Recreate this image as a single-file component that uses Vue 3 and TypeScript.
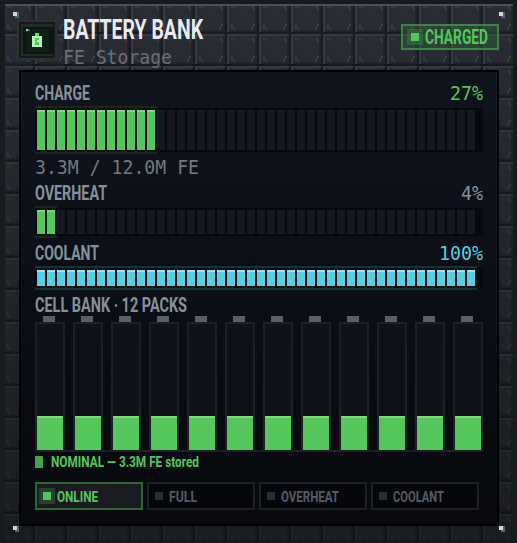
<template>
  <div class="page">
    <div class="machine">
      <svg class="plates" width="508" height="537" shape-rendering="crispEdges">
        <defs>
          <pattern id="plate" x="-2" y="-2" width="32" height="32" patternUnits="userSpaceOnUse">
            <rect width="32" height="32" fill="#181b20" />
            <rect width="30" height="30" fill="#2a2d35" />
            <rect width="30" height="2" fill="#383b41" />
            <rect width="2" height="30" fill="#383b41" />
            <rect x="28" y="2" width="2" height="28" fill="#21242b" />
            <rect x="2" y="28" width="28" height="2" fill="#21242b" />
            <rect v-for="(s, i) in specks" :key="i" :x="s[0]" :y="s[1]" :width="s[2]" :height="s[3]" :fill="s[4]" />
          </pattern>
        </defs>
        <rect width="508" height="537" fill="url(#plate)" />
      </svg>
      <div class="shade"></div>
      <i v-for="n in 4" :key="n" class="rivet" :class="'r' + n"></i>

      <div class="content">
        <div class="header">
          <div class="icon">
            <svg width="26" height="26" viewBox="0 0 26 26" shape-rendering="crispEdges">
              <rect width="30" height="27" x="-1" fill="#0a150f" />
              <rect x="2" y="2" width="23" height="23" fill="#0e2014" />
              <rect x="2" y="2" width="2" height="2" fill="#7ce08c" />
              <rect x="4" y="2" width="2" height="2" fill="#2b6a42" />
              <rect x="11" y="6" width="4" height="3" fill="#5fe070" />
              <rect x="8" y="9" width="10" height="11" fill="#b5f5b8" />
              <rect x="11" y="11" width="4" height="7" fill="#56c95c" />
              <rect x="13" y="13" width="2" height="2" fill="#d8ffd8" />
            </svg>
          </div>
          <div class="titles">
            <FitText class="title" text="BATTERY BANK" :w="140" :cap="19" />
            <FitText class="subtitle" text="FE Storage" :w="109" :cap="14" mono />
          </div>
          <div class="badge">
            <i class="led"></i>
            <FitText class="badge-text" text="CHARGED" :w="63" :cap="14" />
          </div>
        </div>

        <div class="screen">
          <template v-for="g in gauges" :key="g.name">
            <div class="head" :class="g.name">
              <FitText class="label" :text="g.label" :w="g.labelW" :cap="14" />
              <FitText class="value" :text="g.value" :w="g.valueW" :cap="14" mono />
            </div>
            <div class="bar" :class="g.name">
              <i v-for="n in 44" :key="n" class="seg" :class="{ on: n <= g.filled }"></i>
              <div v-if="g.filled" class="glow" :style="{ width: g.filled * 10 + 2 + 'px' }"></div>
            </div>
            <FitText v-if="g.note" class="note" :text="g.note" :w="164" :cap="14" mono />
          </template>

          <FitText class="label bank-label" text="CELL BANK · 12 PACKS" :w="152" :cap="14" />
          <div class="bank">
            <div v-for="n in 12" :key="n" class="pack">
              <div class="cap"></div>
              <div class="cell">
                <div class="fill" :style="{ height: packLevel + '%' }"></div>
              </div>
            </div>
          </div>
          <div class="status">
            <i class="mark"></i>
            <FitText text="NOMINAL — 3.3M FE stored" :w="148" :cap="11" />
          </div>

          <div class="chips">
            <div v-for="c in chips" :key="c.text" class="chip" :class="{ active: c.active }">
              <i class="led"></i>
              <FitText :text="c.text" :w="c.w" :cap="11" />
            </div>
          </div>
        </div>
      </div>
    </div>
  </div>
</template>

<script setup lang="ts">
import { h, ref } from 'vue';

interface FitProps {
  text: string;
  w: number;
  cap: number;
  mono?: boolean;
}

interface Gauge {
  name: string;
  label: string;
  labelW: number;
  value: string;
  valueW: number;
  filled: number;
  note?: string;
}

// one line of text, squeezed to a width; the box is as tall as a capital letter
const FitText = (props: FitProps) =>
  h('svg', {
    width: props.w,
    height: props.cap,
    'font-size': props.cap / (props.mono ? 0.729 : 0.711),
    'font-family': props.mono ? '"DejaVu Sans Mono", monospace' : 'Roboto, "Liberation Sans", sans-serif',
    fill: 'currentColor',
  }, [
    h('text', { x: 0, y: props.cap, textLength: props.w, lengthAdjust: 'spacingAndGlyphs' }, props.text),
  ]);
FitText.props = { text: String, w: Number, cap: Number, mono: Boolean };

const packLevel = ref(26.99);

const gauges = ref<Gauge[]>([
  { name: 'charge', label: 'CHARGE', labelW: 55, value: '27%', valueW: 33, filled: 12, note: '3.3M / 12.0M FE' },
  { name: 'overheat', label: 'OVERHEAT', labelW: 72, value: '4%', valueW: 22, filled: 2 },
  { name: 'coolant', label: 'COOLANT', labelW: 64, value: '100%', valueW: 44, filled: 44 },
]);

const chips = ref([
  { text: 'ONLINE', w: 41, active: true },
  { text: 'FULL', w: 28, active: false },
  { text: 'OVERHEAT', w: 58, active: false },
  { text: 'COOLANT', w: 51, active: false },
]);

// x, y, width, height, colour of the wear marks on one plate
const specks: [number, number, number, number, string][] = [
  [4, 4, 2, 2, '#363940'],
  [6, 4, 4, 2, '#30333b'],
  [8, 8, 2, 2, '#252830'],
  [16, 4, 4, 2, '#2e3139'],
  [24, 4, 4, 2, '#363a41'],
  [26, 6, 2, 2, '#3a3e44'],
  [22, 8, 2, 2, '#24272e'],
  [12, 10, 6, 2, '#2e3139'],
  [6, 14, 2, 2, '#24272e'],
  [18, 14, 2, 2, '#252830'],
  [20, 16, 4, 2, '#2e3139'],
  [10, 18, 2, 2, '#252830'],
  [4, 22, 2, 2, '#363a41'],
  [4, 24, 2, 2, '#3b3f45'],
  [6, 26, 2, 2, '#3b3f45'],
  [26, 22, 2, 2, '#3d4147'],
  [24, 24, 2, 2, '#3d4147'],
  [24, 26, 2, 2, '#363a41'],
  [14, 24, 4, 2, '#252830'],
];
</script>

<style>
body {
  margin: 0;
  background: #17181a;
}
</style>

<style scoped>
.page {
  box-sizing: border-box;
  width: 517px;
  height: 543px;
  padding: 4px 4px 3px 5px;
  overflow: hidden;
  background: #191a1d;
}
.machine {
  position: relative;
  width: 508px;
  height: 536px;
  overflow: hidden;
}
svg {
  display: block;
  overflow: visible;
  flex: none;
}
.plates, .shade {
  position: absolute;
  left: 0;
  top: 0;
}
.shade {
  width: 508px;
  height: 536px;
  box-sizing: border-box;
  border-top: 2px solid #4a5056;
  background: linear-gradient(rgba(8, 10, 12, 0), rgba(8, 10, 12, 0.5));
}
.rivet {
  position: absolute;
  width: 4px;
  height: 4px;
  background: #d0d8de;
  box-shadow: 2px 0 #59636a, 2px 2px #59636a;
}
.r1, .r3 { left: 8px; }
.r2, .r4 { left: 494px; }
.r1, .r2 { top: 8px; }
.r3, .r4 { top: 522px; z-index: 1; }
.content {
  position: relative;
  padding: 0 14px;
}
.header {
  display: flex;
  height: 66px;
  box-sizing: border-box;
  padding-top: 16px;
}
.icon {
  box-sizing: border-box;
  width: 36px;
  height: 36px;
  margin-top: 2px;
  padding: 3px;
  border: 2px solid #15181a;
  background: #24282a;
  box-shadow: 0 0 0 2px #29342f;
}
.titles {
  display: flex;
  flex-direction: column;
  gap: 11px;
  margin-left: 8px;
}
.title {
  color: #e8eaf0;
  font-weight: 700;
}
.subtitle {
  color: #6c6f77;
}
.badge {
  display: flex;
  align-items: center;
  box-sizing: border-box;
  width: 98px;
  height: 26px;
  margin: 4px 0 0 auto;
  padding-left: 8px;
  border: 2px solid #3d8346;
  background: rgba(45, 105, 55, 0.42);
  color: #55c65b;
}
.badge-text {
  margin-left: 6px;
  font-weight: 700;
}
.led {
  flex: none;
  width: 8px;
  height: 8px;
  background: #2a2c36;
}
.badge .led, .active .led {
  background: #55c65b;
  box-shadow: 0 0 0 4px rgba(85, 198, 91, 0.22);
}
.screen {
  box-sizing: border-box;
  width: 480px;
  height: 456px;
  padding: 14px;
  border: 2px solid #000;
  background: linear-gradient(#10141d, #0b0e15 50%, #07090e);
}
.head {
  display: flex;
  justify-content: space-between;
}
.head.overheat {
  margin-top: 12px;
}
.head.coolant {
  margin-top: 10px;
}
.label {
  color: #86919d;
  font-weight: 700;
}
.value {
  color: #86919d;
}
.charge .value {
  color: #55c65b;
}
.coolant .value {
  color: #58cee4;
}
.bar {
  position: relative;
  display: flex;
  gap: 2px;
  box-sizing: border-box;
  height: 44px;
  margin-top: 8px;
  padding: 2px;
  background: #07090d;
}
.bar.overheat {
  height: 28px;
}
.bar.coolant {
  height: 20px;
}
.seg {
  flex: none;
  width: 8px;
  background: #151921;
}
.seg.on {
  background: #55c65b;
  border-top: 2px solid #80d884;
  box-sizing: border-box;
}
.coolant .seg.on {
  background: #58cee4;
  border-top-color: #9ae4f0;
}
.glow {
  position: absolute;
  left: 0;
  top: -2px;
  bottom: -2px;
  box-sizing: border-box;
  border: solid #182a20;
  border-width: 2px 0;
}
.coolant .glow {
  border-color: #183038;
}
.note {
  margin-top: 8px;
  color: #75787f;
}
.bank-label {
  margin-top: 10px;
}
.bank {
  display: flex;
  gap: 8px;
  margin-top: 4px;
  box-shadow: inset 0 -2px #1d2025;
}
.pack {
  width: 30px;
}
.cap {
  width: 12px;
  height: 6px;
  margin-left: 8px;
  background: #596167;
}
.cell {
  display: flex;
  align-items: flex-end;
  box-sizing: border-box;
  height: 130px;
  border: 2px solid #1d2025;
  background: #0f121a;
}
.fill {
  box-sizing: border-box;
  width: 100%;
  border-top: 2px solid #80d884;
  background: #55c65b;
}
.status {
  display: flex;
  gap: 8px;
  height: 12px;
  margin-top: 4px;
  color: #55c65b;
  font-weight: 700;
}
.mark {
  width: 8px;
  height: 12px;
  background: #46a04c;
}
.chips {
  display: flex;
  gap: 4px;
  margin-top: 14px;
}
.chip {
  display: flex;
  align-items: center;
  gap: 6px;
  box-sizing: border-box;
  width: 108px;
  height: 28px;
  padding-left: 6px;
  border: 2px solid #1f2126;
  background: #06070b;
  color: #565b69;
  font-weight: 700;
}
.chip.active {
  border-color: #2f6538;
  background: #1a1c22;
  color: #55c65b;
}
</style>
